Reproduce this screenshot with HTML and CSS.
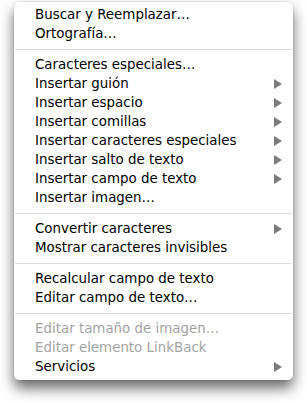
FILE: index.html
```html
<!DOCTYPE html>
<html lang="es">
<head>
<meta charset="utf-8">
<link rel="stylesheet" href="styles.css">
</head>
<body>
<div class="menu">
  <div class="item">Buscar y Reemplazar…</div>
  <div class="item">Ortografía…</div>
  <div class="sep"></div>
  <div class="item">Caracteres especiales…</div>
  <div class="item sub">Insertar guión</div>
  <div class="item sub">Insertar espacio</div>
  <div class="item sub">Insertar comillas</div>
  <div class="item sub">Insertar caracteres especiales</div>
  <div class="item sub">Insertar salto de texto</div>
  <div class="item sub">Insertar campo de texto</div>
  <div class="item">Insertar imagen…</div>
  <div class="sep"></div>
  <div class="item sub">Convertir caracteres</div>
  <div class="item">Mostrar caracteres invisibles</div>
  <div class="sep"></div>
  <div class="item">Recalcular campo de texto</div>
  <div class="item">Editar campo de texto…</div>
  <div class="sep"></div>
  <div class="item disabled">Editar tamaño de imagen…</div>
  <div class="item disabled">Editar elemento LinkBack</div>
  <div class="item sub">Servicios</div>
</div>
</body>
</html>
```

FILE: styles.css
```css
html, body {
  margin: 0;
  padding: 0;
  background: #ffffff;
}
body {
  width: 307px;
  height: 404px;
  overflow: hidden;
  padding: 2px 0 0 14px;
  box-sizing: border-box;
}
.menu {
  width: 279px;
  height: 378px;
  box-sizing: border-box;
  padding: 3px 0 4px 0;
  background: #ffffff;
  border-radius: 5px;
  box-shadow: 0 0 0 1px rgba(0,0,0,0.06), 0 8px 14px rgba(0,0,0,0.6);
  font-family: "DejaVu Sans", sans-serif;
  font-size: 13.4px;
  color: #000000;
  display: flex;
  flex-direction: column;
}
.item {
  height: 19px;
  line-height: 19px;
  padding-left: 21px;
  padding-right: 11px;
  display: flex;
  align-items: center;
  justify-content: space-between;
  white-space: nowrap;
}
.item.sub::after {
  content: "";
  width: 0;
  height: 0;
  border-top: 5px solid transparent;
  border-bottom: 5px solid transparent;
  border-left: 8px solid #7b7b7b;
}
.item.disabled {
  color: #a3a3a3;
}
.sep {
  height: 12px;
  display: flex;
  align-items: center;
}
.sep::before {
  content: "";
  flex: 1;
  height: 1px;
  margin: 0 1px;
  background: #dedede;
}
```
